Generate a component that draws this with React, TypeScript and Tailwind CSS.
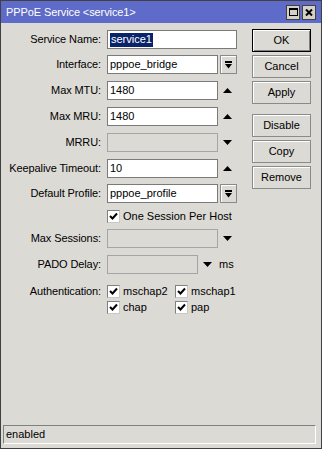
import React from "react";

const UpArrow = () => (
  <svg width="9" height="5" viewBox="0 0 9 5"><path d="M4.5 0 L9 5 L0 5 Z" fill="#000" /></svg>
);
const DownArrow = () => (
  <svg width="9" height="5" viewBox="0 0 9 5"><path d="M0 0 L9 0 L4.5 5 Z" fill="#000" /></svg>
);

const DropBtn = () => (
  <div className="ml-[2px] w-[17px] h-[19px] flex items-center justify-center border border-[#8a8a8a] shadow-[inset_1px_1px_0_#ffffff] bg-[#dcdad5]">
    <svg width="7" height="8" viewBox="0 0 7 8">
      <rect x="0" y="0" width="7" height="2" fill="#000" />
      <path d="M0 3 L7 3 L3.5 7.5 Z" fill="#000" />
    </svg>
  </div>
);

const Check = ({ checked = true }: { checked?: boolean }) => (
  <div className="w-[13px] h-[13px] bg-white border border-t-[#808080] border-l-[#808080] border-r-[#c8c8c8] border-b-[#c8c8c8] flex items-center justify-center shrink-0">
    {checked && (
      <svg width="9" height="9" viewBox="0 0 9 9">
        <path d="M1 4 L3.5 6.5 L8 1.5" stroke="#000" strokeWidth="2" fill="none" />
      </svg>
    )}
  </div>
);

const Label = ({ children }: { children: React.ReactNode }) => (
  <div className="w-[100px] text-right whitespace-nowrap shrink-0 tracking-[-0.1px]">{children}</div>
);

const Input = ({ value, w, disabled = false, children }: { value?: React.ReactNode; w: string; disabled?: boolean; children?: React.ReactNode }) => (
  <div
    className={
      (disabled ? "bg-[#dcdad5] border-[#a5a5a5] " : "bg-white border-[#7a7a7a] ") +
      "h-[19px] border flex items-center pl-[2px] whitespace-nowrap " +
      w
    }
  >
    {value}
    {children}
  </div>
);

const Btn = ({ children, def = false }: { children: React.ReactNode; def?: boolean }) => (
  <div
    className={
      "w-[59px] h-[23px] flex items-center justify-center bg-[#dcdad5] " +
      (def
        ? "border border-black shadow-[inset_1px_1px_0_#ffffff,inset_-1px_-1px_0_#808080]"
        : "border border-[#8a8a8a] shadow-[inset_1px_1px_0_#ffffff]")
    }
  >
    {children}
  </div>
);

export default function App() {
  return (
    <div className="w-[322px] h-[449px] bg-[#dcdad5] border border-[#404040] flex flex-col font-['Liberation_Sans',Arial,sans-serif] text-[11px] text-black leading-none">
      {/* title bar */}
      <div className="h-[22px] bg-[#5e6bc8] flex items-center pl-[5px] pr-[5px] text-white">
        <span className="tracking-[-0.1px]">PPPoE Service &lt;service1&gt;</span>
        <div className="ml-auto flex gap-[2px]">
          <div className="w-[14px] h-[15px] bg-[#d4d0c8] border border-[#404040] flex items-center justify-center">
            <div className="w-[9px] h-[8px] border border-black border-t-2" />
          </div>
          <div className="w-[14px] h-[15px] bg-[#d4d0c8] border border-[#404040] flex items-center justify-center">
            <svg width="8" height="7" viewBox="0 0 8 7">
              <path d="M1 0.5 L7 6.5 M7 0.5 L1 6.5" stroke="#000" strokeWidth="2" />
            </svg>
          </div>
        </div>
      </div>

      <div className="flex-1 flex">
        {/* form */}
        <div className="w-[251px] pt-[7px] flex flex-col">
          <div className="flex items-center h-[19px]">
            <Label>Service Name:</Label>
            <div className="ml-[6px]">
              <Input w="w-[130px]">
                <span className="bg-[#0a246a] text-white h-[14px] px-[1px] flex items-center">service1</span>
              </Input>
            </div>
          </div>
          <div className="flex items-center h-[19px] mt-[6px]">
            <Label>Interface:</Label>
            <div className="ml-[6px] flex">
              <Input w="w-[111px]" value="pppoe_bridge" />
              <DropBtn />
            </div>
          </div>
          <div className="flex items-center h-[19px] mt-[7px]">
            <Label>Max MTU:</Label>
            <div className="ml-[6px] flex items-center">
              <Input w="w-[111px]" value="1480" />
              <div className="w-[19px] flex justify-center"><UpArrow /></div>
            </div>
          </div>
          <div className="flex items-center h-[19px] mt-[7px]">
            <Label>Max MRU:</Label>
            <div className="ml-[6px] flex items-center">
              <Input w="w-[111px]" value="1480" />
              <div className="w-[19px] flex justify-center"><UpArrow /></div>
            </div>
          </div>
          <div className="flex items-center h-[19px] mt-[7px]">
            <Label>MRRU:</Label>
            <div className="ml-[6px] flex items-center">
              <Input w="w-[111px]" disabled />
              <div className="w-[19px] flex justify-center"><DownArrow /></div>
            </div>
          </div>
          <div className="flex items-center h-[19px] mt-[7px]">
            <Label>Keepalive Timeout:</Label>
            <div className="ml-[6px] flex items-center">
              <Input w="w-[111px]" value="10" />
              <div className="w-[19px] flex justify-center"><UpArrow /></div>
            </div>
          </div>
          <div className="flex items-center h-[19px] mt-[6px]">
            <Label>Default Profile:</Label>
            <div className="ml-[6px] flex">
              <Input w="w-[111px]" value="pppoe_profile" />
              <DropBtn />
            </div>
          </div>
          <div className="flex items-center h-[15px] mt-[6px]">
            <div className="w-[100px] shrink-0" />
            <div className="ml-[6px] flex items-center gap-[3px]">
              <Check />
              <span>One Session Per Host</span>
            </div>
          </div>
          <div className="flex items-center h-[19px] mt-[5px]">
            <Label>Max Sessions:</Label>
            <div className="ml-[6px] flex items-center">
              <Input w="w-[111px]" disabled />
              <div className="w-[19px] flex justify-center"><DownArrow /></div>
            </div>
          </div>
          <div className="flex items-center h-[19px] mt-[7px]">
            <Label>PADO Delay:</Label>
            <div className="ml-[6px] flex items-center">
              <Input w="w-[91px]" disabled />
              <div className="ml-[5px] w-[9px] flex justify-center"><DownArrow /></div>
              <span className="ml-[7px]">ms</span>
            </div>
          </div>
          <div className="flex items-center h-[14px] mt-[10px]">
            <Label>Authentication:</Label>
            <div className="ml-[6px] flex items-center">
              <div className="w-[68px] flex items-center gap-[3px]"><Check /><span>mschap2</span></div>
              <div className="flex items-center gap-[3px]"><Check /><span>mschap1</span></div>
            </div>
          </div>
          <div className="flex items-center h-[14px] mt-[2px]">
            <div className="w-[100px] shrink-0" />
            <div className="ml-[6px] flex items-center">
              <div className="w-[68px] flex items-center gap-[3px]"><Check /><span>chap</span></div>
              <div className="flex items-center gap-[3px]"><Check /><span>pap</span></div>
            </div>
          </div>
        </div>

        {/* buttons */}
        <div className="pt-[6px] flex flex-col">
          <Btn def>OK</Btn>
          <div className="mt-[3px]"><Btn>Cancel</Btn></div>
          <div className="mt-[3px]"><Btn>Apply</Btn></div>
          <div className="mt-[10px]"><Btn>Disable</Btn></div>
          <div className="mt-[3px]"><Btn>Copy</Btn></div>
          <div className="mt-[3px]"><Btn>Remove</Btn></div>
        </div>
      </div>

      {/* status bar */}
      <div className="ml-[2px] mr-[5px] mb-[4px] h-[19px] border border-t-[#808080] border-l-[#808080] border-r-white border-b-white flex items-center pl-[2px]">
        enabled
      </div>
    </div>
  );
}
